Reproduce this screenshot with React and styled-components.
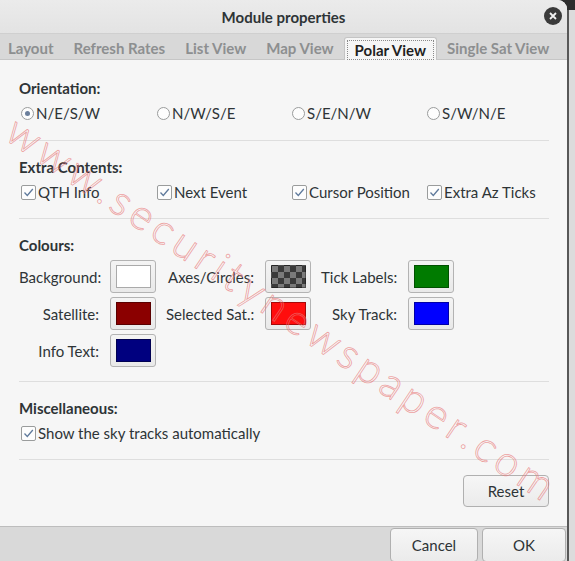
import React from "react";
import styled, { createGlobalStyle } from "styled-components";

const GlobalStyle = createGlobalStyle`
  html, body { margin: 0; padding: 0; }
  body {
    font-family: Lato, "Noto Sans", sans-serif;
    font-size: 15px;
    color: #2e3436;
    background: #2e2e2e;
  }
`;

const Page = styled.div`
  position: relative;
  width: 575px;
  height: 561px;
  display: flex;
  overflow: hidden;
  background: #2e2e2e;
`;

const Window = styled.div`
  width: 567px;
  height: 561px;
  display: flex;
  flex-direction: column;
  background: #f6f6f6;
  border-top-right-radius: 9px;
  overflow: hidden;
`;

const Edge = styled.div`
  flex: 1;
  margin-top: 10px;
  background: #dcdcdc;
  border-left: 2px solid #585858;
`;

const TitleBar = styled.div`
  height: 33px;
  flex: none;
  display: flex;
  align-items: center;
  justify-content: center;
  position: relative;
  background: linear-gradient(#ebebeb, #e3e3e3);
  border-bottom: 1px solid #cfcfcf;
  font-weight: 700;
  font-size: 15px;
  color: #2e3436;
`;

const CloseButton = styled.div`
  position: absolute;
  right: 5px;
  top: 7px;
  width: 18px;
  height: 18px;
  border-radius: 50%;
  background: #3a3a3a;
  display: flex;
  align-items: center;
  justify-content: center;
`;

const TabBar = styled.div`
  height: 25px;
  flex: none;
  display: flex;
  align-items: flex-end;
  background: #d8d8d8;
  border-bottom: 1px solid #c6c6c6;
`;

const Tab = styled.div`
  height: ${(p) => (p.$active ? "23px" : "24px")};
  box-sizing: border-box;
  padding: ${(p) => (p.$active ? "2px 2px 0" : "0 10px")};
  display: flex;
  align-items: center;
  font-weight: 700;
  font-size: 15px;
  color: ${(p) => (p.$active ? "#1f1f1f" : "#8d8f90")};
  background: ${(p) => (p.$active ? "#f6f6f6" : "transparent")};
  border: ${(p) => (p.$active ? "1px solid #c4c4c4" : "none")};
  border-bottom: none;
  border-radius: 3px 3px 0 0;
  margin-bottom: -1px;
  &:first-child { padding-left: 8px; padding-right: 10px; }
`;

const TabFocus = styled.span`
  display: flex;
  align-items: center;
  height: 18px;
  padding: 0 7px;
  border: 1px dotted #8a8a8a;
`;

const Content = styled.div`
  flex: 1;
  padding: 2px 18px 0 19px;
  display: flex;
  flex-direction: column;
`;

const Section = styled.div`
  padding: 16px 0 ${(p) => p.$pb || 16}px;
  border-bottom: 1px solid #dedede;
  display: flex;
  flex-direction: column;
  gap: 5px;
`;

const Heading = styled.div`
  font-weight: 700;
  font-size: 15px;
  line-height: 20px;
  color: #2e3436;
`;

const OptionRow = styled.div`
  display: grid;
  grid-template-columns: 138px 135px 135px 135px;
  height: 20px;
  align-items: center;
`;

const SingleRow = styled.div`
  display: flex;
  height: 20px;
  align-items: center;
`;

const Option = styled.label`
  display: flex;
  align-items: center;
  gap: 2px;
  line-height: 20px;
  font-size: 15px;
  color: #2e3436;
  white-space: nowrap;
  padding-left: ${(p) => (p.$first ? "2px" : "0")};
`;

const RadioCircle = styled.span`
  width: 13px;
  height: 13px;
  box-sizing: border-box;
  border-radius: 50%;
  border: 1px solid #9a9c9c;
  background: #fdfdfd;
  display: flex;
  align-items: center;
  justify-content: center;
  flex: none;
  &::after {
    content: "";
    width: 5px;
    height: 5px;
    border-radius: 50%;
    background: ${(p) => (p.$checked ? "#6b7f9c" : "transparent")};
  }
`;

const CheckBoxBox = styled.span`
  width: 15px;
  height: 15px;
  box-sizing: border-box;
  border: 1px solid #9a9c9c;
  border-radius: 2px;
  background: #fdfdfd;
  display: flex;
  align-items: center;
  justify-content: center;
  flex: none;
`;

const ColourGrid = styled.div`
  display: grid;
  grid-template-columns: 81px 46px 89px 46px 77px 46px;
  grid-auto-rows: 33px;
  column-gap: 10px;
  row-gap: 4px;
  align-items: center;
`;

const ColourLabel = styled.div`
  text-align: right;
  padding-right: 1px;
  font-size: 15px;
  color: #2e3436;
  white-space: nowrap;
`;

const Swatch = styled.div`
  height: 33px;
  box-sizing: border-box;
  border: 1px solid #b3b3b3;
  border-radius: 3px;
  background: linear-gradient(#f4f4f4, #e9e9e9);
  padding: 4px 4px 4px 5px;
  display: flex;
`;

const SwatchFill = styled.div`
  flex: 1;
  border: 1px solid ${(p) => (p.$light ? "#aaaaaa" : "rgba(0,0,0,0.35)")};
  background: ${(p) => p.$color};
  ${(p) =>
    p.$checker &&
    `background: repeating-conic-gradient(#3a3a3a 0% 25%, #7a7a7a 0% 50%) 0 0 / 12px 12px;`}
`;

const ResetRow = styled.div`
  display: flex;
  justify-content: flex-end;
  padding-top: 15px;
`;

const Button = styled.button`
  font-family: Lato, "Noto Sans", sans-serif;
  font-size: 15px;
  color: #2e3436;
  height: ${(p) => p.$h || 32}px;
  width: ${(p) => p.$w}px;
  box-sizing: border-box;
  border: 1px solid #b0b0b0;
  border-radius: 4px;
  background: linear-gradient(#f6f6f6, #ebebeb);
  padding: 0;
`;

const Footer = styled.div`
  height: 33px;
  flex: none;
  background: #d9d9d9;
  border-top: 1px solid #bdbdbd;
  display: flex;
  justify-content: flex-end;
  align-items: flex-start;
  gap: 4px;
  padding: 1px 1px 0 0;
`;

const Watermark = styled.div`
  position: absolute;
  left: 12px;
  top: 100px;
  transform-origin: 0 50%;
  transform: rotate(34deg);
  font-family: Lato, sans-serif;
  font-weight: 300;
  font-size: 42px;
  letter-spacing: 5px;
  white-space: nowrap;
  color: transparent;
  -webkit-text-stroke: 0.8px rgba(232, 120, 120, 0.7);
  pointer-events: none;
`;

const Check = () => (
  <svg width="13" height="13" viewBox="0 0 13 13">
    <path d="M2.5 6.5 L5.3 9.5 L10.8 3" fill="none" stroke="#5f7a9c" strokeWidth="1.3" />
  </svg>
);

const Radio = ({ checked, label, first }) => (
  <Option $first={first}>
    <RadioCircle $checked={checked} />
    {label}
  </Option>
);

const CheckBox = ({ label, first }) => (
  <Option $first={first}>
    <CheckBoxBox>
      <Check />
    </CheckBoxBox>
    {label}
  </Option>
);

const tabs = ["Layout", "Refresh Rates", "List View", "Map View", "Polar View", "Single Sat View"];

export default function App() {
  return (
    <>
      <GlobalStyle />
      <Page>
        <Window>
          <TitleBar>
            Module properties
            <CloseButton>
              <svg width="8" height="8" viewBox="0 0 8 8">
                <path d="M1 1 L7 7 M7 1 L1 7" stroke="#f2f2f2" strokeWidth="1.8" />
              </svg>
            </CloseButton>
          </TitleBar>
          <TabBar>
            {tabs.map((t) =>
              t === "Polar View" ? (
                <Tab key={t} $active>
                  <TabFocus>{t}</TabFocus>
                </Tab>
              ) : (
                <Tab key={t}>{t}</Tab>
              )
            )}
          </TabBar>
          <Content>
            <Section $pb={17}>
              <Heading>Orientation:</Heading>
              <OptionRow>
                <Radio checked first label="N/E/S/W" />
                <Radio label="N/W/S/E" />
                <Radio label="S/E/N/W" />
                <Radio label="S/W/N/E" />
              </OptionRow>
            </Section>
            <Section>
              <Heading>Extra Contents:</Heading>
              <OptionRow>
                <CheckBox first label="QTH Info" />
                <CheckBox label="Next Event" />
                <CheckBox label="Cursor Position" />
                <CheckBox label="Extra Az Ticks" />
              </OptionRow>
            </Section>
            <Section $pb={14}>
              <Heading>Colours:</Heading>
              <ColourGrid>
                <ColourLabel>Background:</ColourLabel>
                <Swatch><SwatchFill $color="#ffffff" $light /></Swatch>
                <ColourLabel>Axes/Circles:</ColourLabel>
                <Swatch><SwatchFill $checker /></Swatch>
                <ColourLabel>Tick Labels:</ColourLabel>
                <Swatch><SwatchFill $color="#007b00" /></Swatch>

                <ColourLabel>Satellite:</ColourLabel>
                <Swatch><SwatchFill $color="#8b0000" /></Swatch>
                <ColourLabel>Selected Sat.:</ColourLabel>
                <Swatch><SwatchFill $color="#ff0d0d" /></Swatch>
                <ColourLabel>Sky Track:</ColourLabel>
                <Swatch><SwatchFill $color="#0000ff" /></Swatch>

                <ColourLabel>Info Text:</ColourLabel>
                <Swatch><SwatchFill $color="#00007f" /></Swatch>
              </ColourGrid>
            </Section>
            <Section>
              <Heading>Miscellaneous:</Heading>
              <SingleRow>
                <CheckBox first label="Show the sky tracks automatically" />
              </SingleRow>
            </Section>
            <ResetRow>
              <Button $w={86} $h={32}>Reset</Button>
            </ResetRow>
          </Content>
          <Footer>
            <Button $w={88} $h={34}>Cancel</Button>
            <Button $w={84} $h={34}>OK</Button>
          </Footer>
        </Window>
        <Edge />
        <Watermark>www.securitynewspaper.com</Watermark>
      </Page>
    </>
  );
}
